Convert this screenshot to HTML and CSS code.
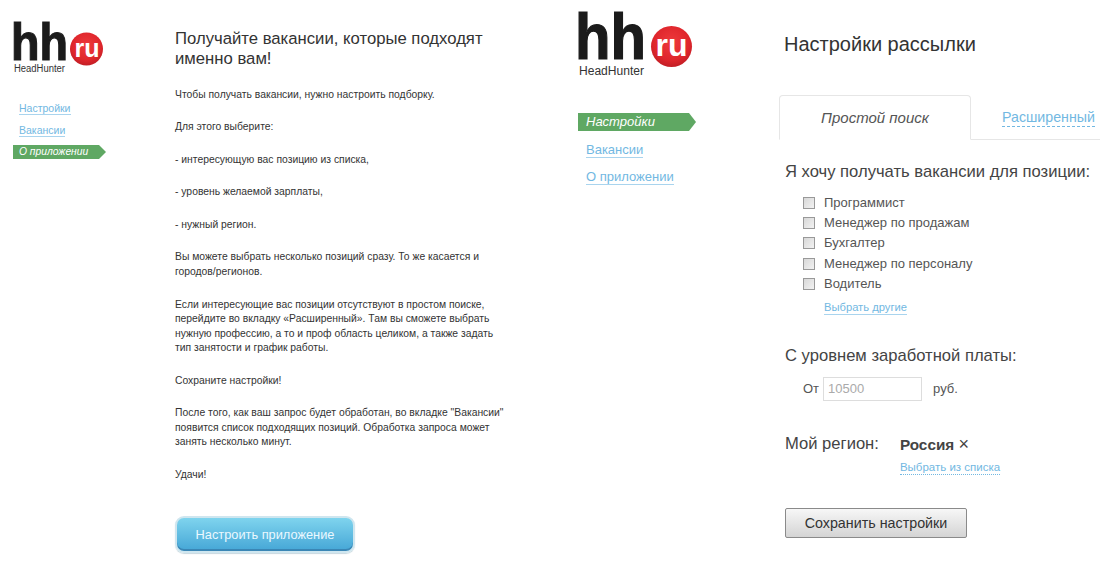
FILE: index.html
```html
<!DOCTYPE html>
<html lang="ru">
<head>
<meta charset="utf-8">
<title>HeadHunter</title>
<link rel="stylesheet" href="styles.css">
</head>
<body>
<div class="page">
  <section class="panel panel-left">
    <aside class="side side-small">
      <svg class="logo logo-small" width="100" height="54" viewBox="0 0 100 54" aria-label="HeadHunter">
        <defs>
          <radialGradient id="ruGrad" cx="50%" cy="40%" r="62%">
            <stop offset="0%" stop-color="#ee3a3c"/>
            <stop offset="70%" stop-color="#df262c"/>
            <stop offset="100%" stop-color="#bf1d24"/>
          </radialGradient>
        </defs>
        <text class="logo-hh" x="-3" y="39" font-size="52" textLength="57" lengthAdjust="spacingAndGlyphs">hh</text>
        <circle class="logo-dot" cx="72.5" cy="28" r="16.5"/>
        <text class="logo-ru" x="73" y="36" font-size="25" text-anchor="middle">ru</text>
        <text class="logo-name" x="0" y="51" font-size="10" textLength="51" lengthAdjust="spacingAndGlyphs">HeadHunter</text>
      </svg>
      <nav class="nav">
        <a class="nav-link" href="#">Настройки</a>
        <a class="nav-link" href="#">Вакансии</a>
        <a class="nav-active" href="#">О приложении</a>
      </nav>
    </aside>
    <main class="about">
      <h1 class="about-title">Получайте вакансии, которые подходят<br>именно вам!</h1>
      <p>Чтобы получать вакансии, нужно настроить подборку.</p>
      <p>Для этого выберите:</p>
      <p>- интересующую вас позицию из списка,</p>
      <p>- уровень желаемой зарплаты,</p>
      <p>- нужный регион.</p>
      <p>Вы можете выбрать несколько позиций сразу. То же касается и<br>городов/регионов.</p>
      <p>Если интересующие вас позиции отсутствуют в простом поиске,<br>перейдите во вкладку «Расширенный». Там вы сможете выбрать<br>нужную профессию, а то и проф область целиком, а также задать<br>тип занятости и график работы.</p>
      <p>Сохраните настройки!</p>
      <p>После того, как ваш запрос будет обработан, во вкладке "Вакансии"<br>появится список подходящих позиций. Обработка запроса может<br>занять несколько минут.</p>
      <p>Удачи!</p>
      <button class="btn-blue" type="button">Настроить приложение</button>
    </main>
  </section>
  <section class="panel panel-right">
    <aside class="side side-large">
      <svg class="logo logo-large" width="120" height="70" viewBox="0 0 120 70" aria-label="HeadHunter">
        <text class="logo-hh" x="-4" y="48" font-size="64.5" textLength="71" lengthAdjust="spacingAndGlyphs">hh</text>
        <circle class="logo-dot" cx="92.5" cy="35.5" r="20.5"/>
        <text class="logo-ru" x="92.5" y="45" font-size="32" text-anchor="middle">ru</text>
        <text class="logo-name" x="0" y="64" font-size="12.5" textLength="65" lengthAdjust="spacingAndGlyphs">HeadHunter</text>
      </svg>
      <nav class="nav">
        <a class="nav-active" href="#">Настройки</a>
        <a class="nav-link" href="#">Вакансии</a>
        <a class="nav-link" href="#">О приложении</a>
      </nav>
    </aside>
    <main class="settings">
      <h1 class="settings-title">Настройки рассылки</h1>
      <div class="tabs">
        <div class="tab-active">Простой поиск</div>
        <a class="tab-link" href="#">Расширенный</a>
      </div>
      <h2 class="section-title">Я хочу получать вакансии для позиции:</h2>
      <ul class="checks">
        <li><span class="box"></span>Программист</li>
        <li><span class="box"></span>Менеджер по продажам</li>
        <li><span class="box"></span>Бухгалтер</li>
        <li><span class="box"></span>Менеджер по персоналу</li>
        <li><span class="box"></span>Водитель</li>
      </ul>
      <a class="more" href="#">Выбрать другие</a>
      <h2 class="section-title salary-title">С уровнем заработной платы:</h2>
      <div class="salary"><span>От</span><span class="input">10500</span><span class="rub">руб.</span></div>
      <div class="region">
        <h2 class="section-title">Мой регион:</h2>
        <div class="region-value">
          <div class="region-name">Россия <span class="cross">×</span></div>
          <a class="region-link" href="#">Выбрать из списка</a>
        </div>
      </div>
      <button class="btn-grey" type="button">Сохранить настройки</button>
    </main>
  </section>
</div>
</body>
</html>
```
FILE: styles.css
```css
* { box-sizing: border-box; }
html, body { margin: 0; padding: 0; background: #fff; }
body { font-family: "Liberation Sans", Arial, sans-serif; color: #333; width: 1100px; height: 577px; overflow: hidden; }
.page { display: flex; align-items: flex-start; }
.panel { display: flex; align-items: flex-start; }
.panel-left { width: 578px; padding-left: 14px; }
.panel-right { width: 522px; }
h1, h2, p { margin: 0; font-weight: normal; }

.side-small { width: 161px; padding-top: 21px; }
.side-large { width: 206px; padding-top: 11px; }

.logo { display: block; overflow: visible; font-family: "Liberation Sans", Arial, sans-serif; }
.logo-large { margin-left: 1px; }
.logo-hh { fill: #1b1b1b; stroke: #1b1b1b; stroke-width: 1.2px; font-weight: bold; }
.logo-dot { fill: url(#ruGrad); }
.logo-ru { fill: #fff; font-weight: bold; }
.logo-name { fill: #333; }

.nav { display: flex; flex-direction: column; align-items: flex-start; }
.nav-link { color: #72b8e2; text-decoration: none; border-bottom: 1px solid #a9d4ee; }
.nav-active { color: #fff; font-style: italic; text-decoration: none; background: #5fa863; clip-path: polygon(0 0, calc(100% - 7px) 0, 100% 50%, calc(100% - 7px) 100%, 0 100%); }

.side-small .nav { font-size: 10.5px; margin-top: 27px; }
.side-small .nav-link { margin-left: 5px; line-height: 12px; margin-bottom: 9px; }
.side-small .nav-active { width: 93px; height: 14px; line-height: 14px; padding-left: 6px; margin: -1px 0 0 -1px; font-size: 10.3px; }

.side-large .nav { font-size: 13px; margin-top: 32px; }
.side-large .nav-active { width: 118px; height: 18px; line-height: 18px; padding-left: 8px; margin-bottom: 12px; }
.side-large .nav-link { margin-left: 8px; line-height: 14px; margin-bottom: 12px; }

.about { width: 345px; padding-top: 29px; font-size: 10.35px; line-height: 14.6px; color: #333; }
.about-title { font-size: 16.7px; line-height: 20px; color: #333; margin-bottom: 19px; }
.about p { margin-bottom: 17.9px; }
.btn-blue { display: block; width: 180px; height: 37px; margin-top: 33px; border: 2px solid #cfe6ef; border-radius: 9px; padding: 0; font-family: inherit; font-size: 12.8px; color: #eaf8ff; background: linear-gradient(#7fd4ee, #45a6d6); box-shadow: inset 0 -2px 0 #3a86b5, 0 1px 1px #c8d8df; }

.settings { width: 316px; padding-top: 32px; }
.settings-title { font-size: 20px; line-height: 24px; color: #333; margin-bottom: 39px; }
.tabs { display: flex; align-items: flex-end; height: 45px; border-bottom: 1px solid #e6e6e6; margin-left: -5px; width: 321px; }
.tab-active { width: 192px; height: 45px; margin-bottom: -1px; line-height: 43px; text-align: center; font-size: 15px; font-style: italic; color: #555; background: #fff; border: 1px solid #e6e6e6; border-bottom: 1px solid #fff; border-radius: 4px 4px 0 0; }
.tab-link { align-self: center; margin-left: 31px; font-size: 14.2px; line-height: 18px; color: #72b8e2; text-decoration: none; border-bottom: 1px dashed #72b8e2; white-space: nowrap; }
.section-title { font-size: 16.6px; line-height: 20px; color: #444; padding-left: 1px; white-space: nowrap; }
.tabs + .section-title { margin-top: 22px; }
.checks { list-style: none; margin: 11px 0 0; padding: 0 0 0 19px; font-size: 13px; line-height: 20px; color: #555; }
.checks li { display: flex; align-items: center; height: 20.2px; }
.box { display: block; width: 12px; height: 12px; margin-right: 9px; border: 1px solid #999; background: linear-gradient(135deg, #d8d8d8, #f2f2f2); }
.more { display: inline-block; margin: 7px 0 0 40px; font-size: 11.2px; line-height: 13px; color: #72b8e2; text-decoration: none; border-bottom: 1px solid #a9d4ee; }
.salary-title { margin-top: 31px; }
.salary { display: flex; align-items: center; margin: 11px 0 0 19px; font-size: 13px; color: #555; }
.input { display: block; width: 99px; height: 24px; margin-left: 4px; padding-left: 4px; line-height: 21px; color: #aaa; border: 1px solid #ddd; }
.rub { margin-left: 11px; }
.region { display: flex; align-items: flex-start; margin-top: 33px; }
.region-value { margin-left: 21px; padding-top: 1px; }
.region-name { font-size: 15.3px; line-height: 20px; font-weight: bold; color: #444; }
.cross { font-size: 18px; line-height: 18px; font-weight: normal; }
.region-link { display: inline-block; margin-top: 6px; font-size: 11.5px; line-height: 13px; color: #72b8e2; text-decoration: none; border-bottom: 1px dotted #72b8e2; }
.btn-grey { display: block; width: 182px; height: 30px; margin: 33px 0 0 1px; padding: 0; border: 1px solid #8a8a8a; border-radius: 2px; font-family: inherit; font-size: 14.3px; color: #333; background: linear-gradient(#f7f7f7, #d4d4d4); }
```
